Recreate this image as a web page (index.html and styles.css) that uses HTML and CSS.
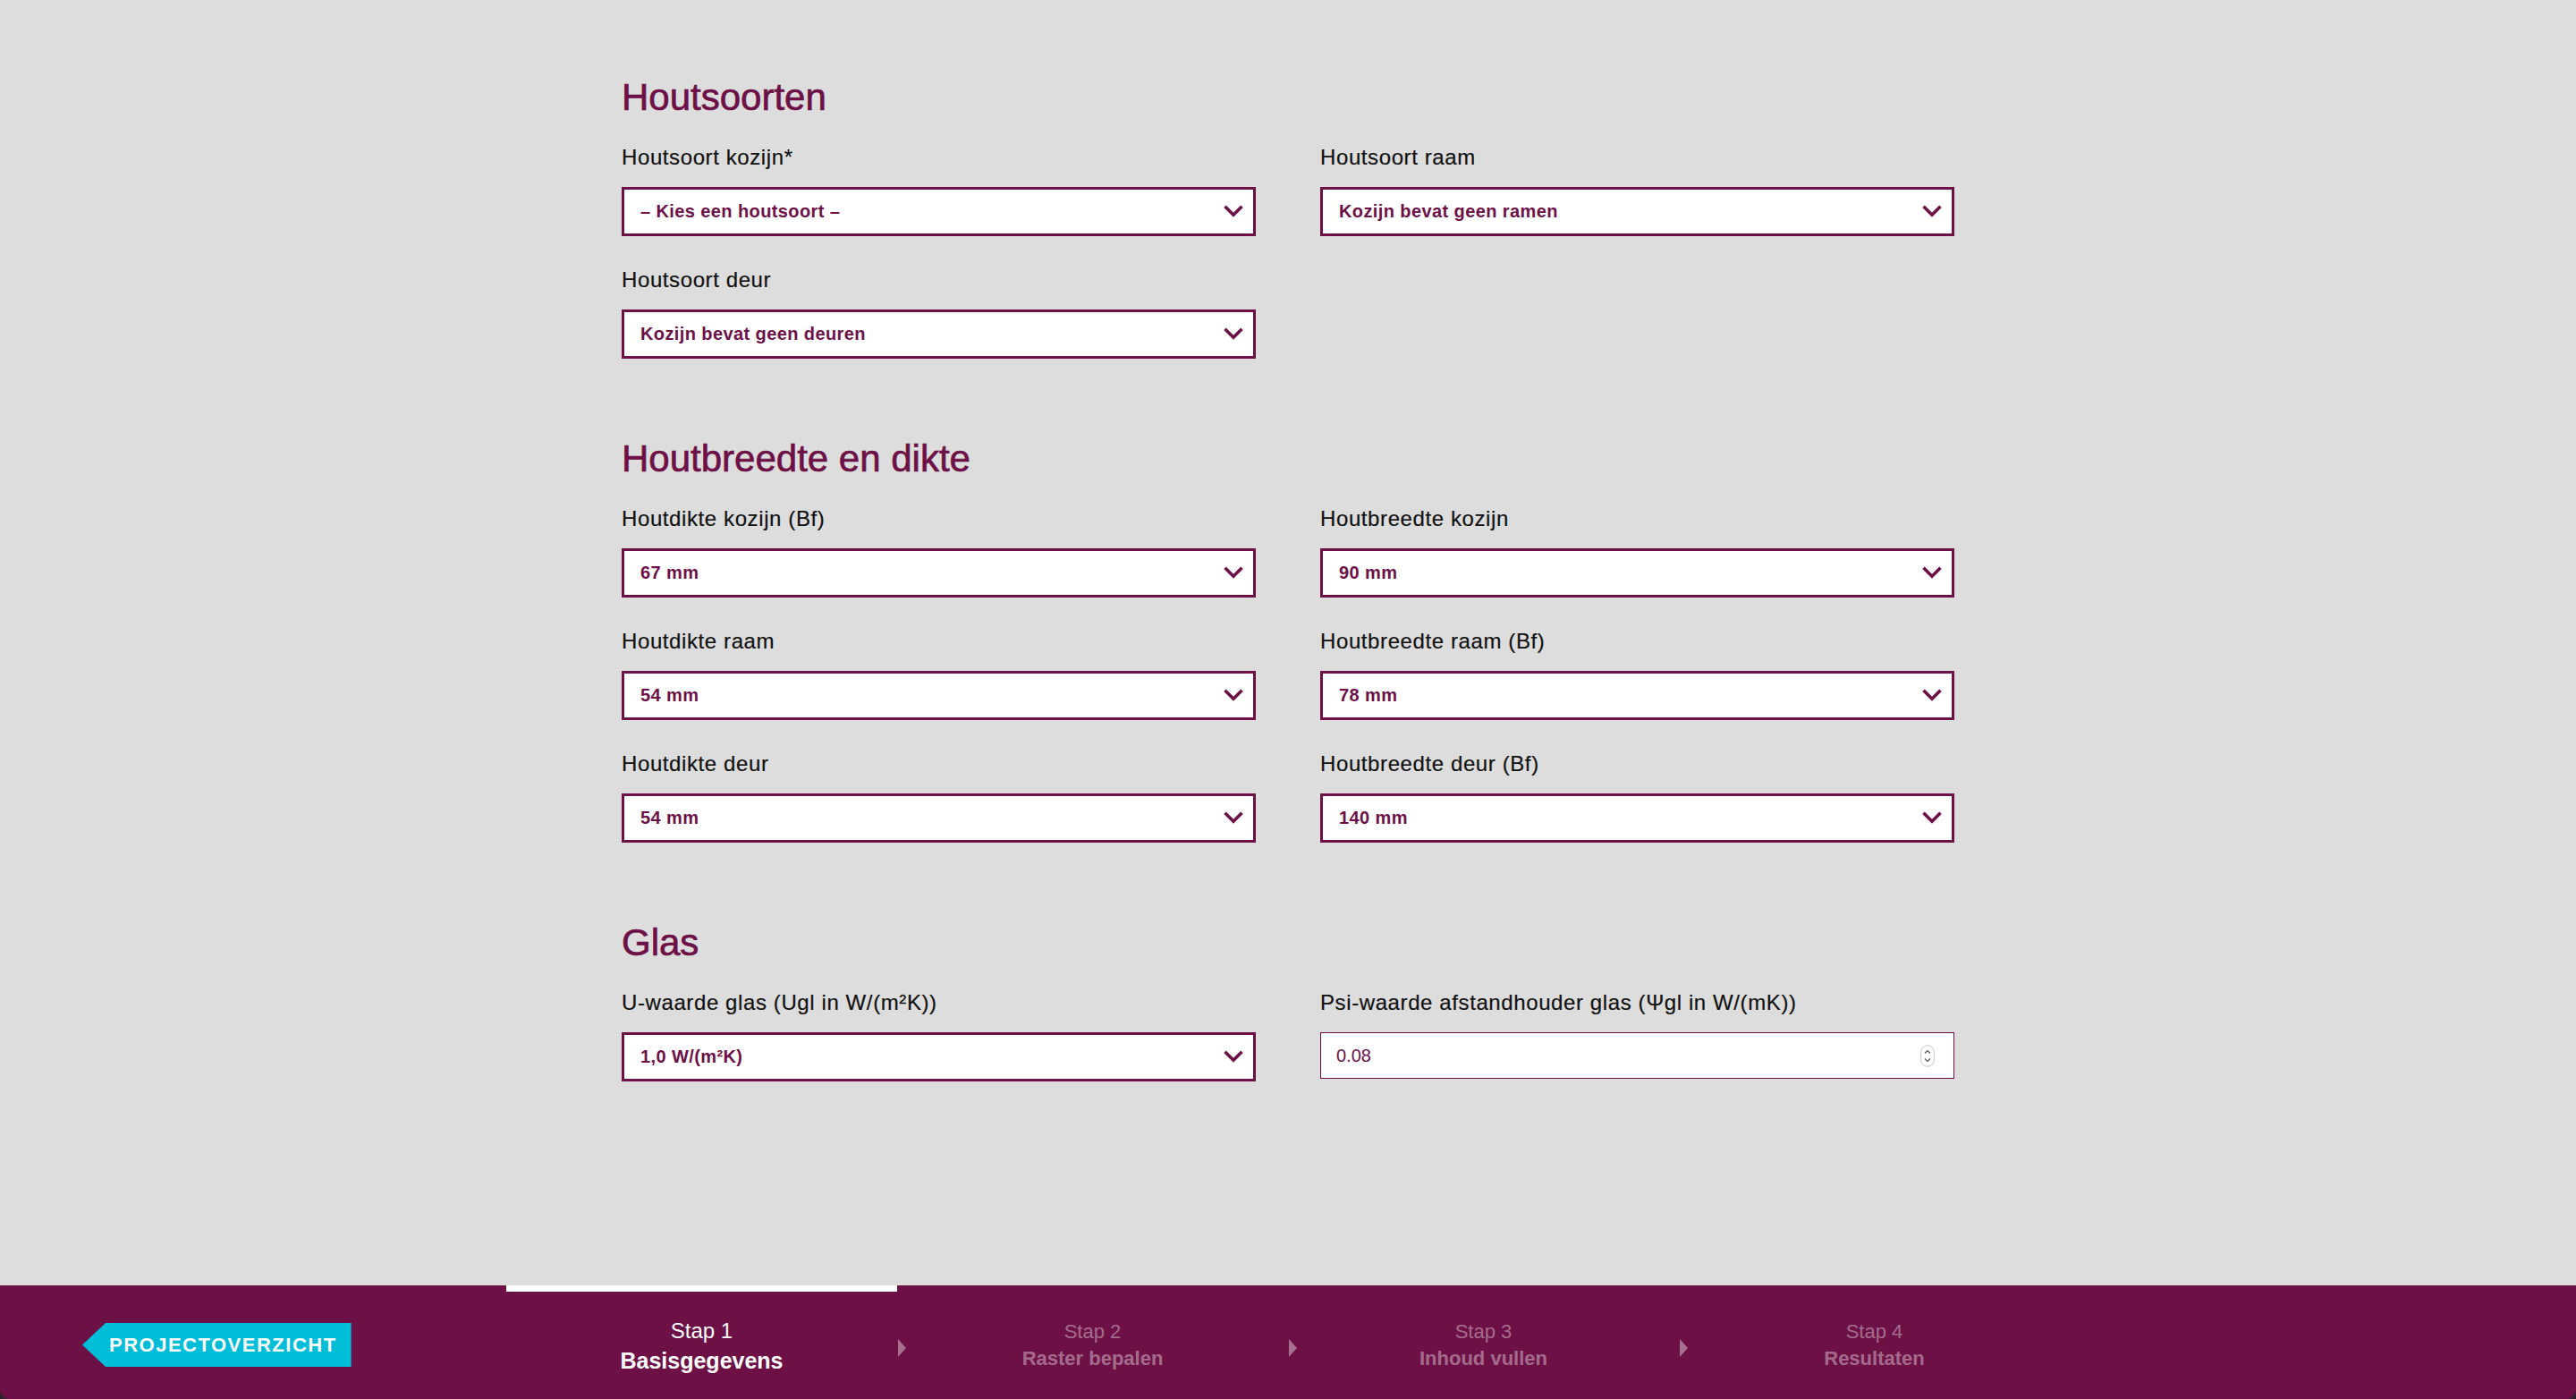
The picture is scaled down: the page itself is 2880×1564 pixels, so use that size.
FILE: index.html
```html
<!DOCTYPE html>
<html lang="nl">
<head>
<meta charset="utf-8">
<title>Basisgegevens</title>
<link rel="stylesheet" href="styles.css">
</head>
<body>
<main class="main">
  <section class="section">
    <h2 class="section-title">Houtsoorten</h2>
    <div class="grid">
      <div class="field">
        <label class="label">Houtsoort kozijn*</label>
        <div class="select"><span class="select-value">– Kies een houtsoort –</span><svg class="chev" width="22" height="14" viewBox="0 0 22 14"><path d="M1.5 1.8 L11 11.3 L20.5 1.8" fill="none" stroke="#6d1046" stroke-width="3.6"/></svg></div>
      </div>
      <div class="field">
        <label class="label">Houtsoort raam</label>
        <div class="select"><span class="select-value">Kozijn bevat geen ramen</span><svg class="chev" width="22" height="14" viewBox="0 0 22 14"><path d="M1.5 1.8 L11 11.3 L20.5 1.8" fill="none" stroke="#6d1046" stroke-width="3.6"/></svg></div>
      </div>
      <div class="field">
        <label class="label">Houtsoort deur</label>
        <div class="select"><span class="select-value">Kozijn bevat geen deuren</span><svg class="chev" width="22" height="14" viewBox="0 0 22 14"><path d="M1.5 1.8 L11 11.3 L20.5 1.8" fill="none" stroke="#6d1046" stroke-width="3.6"/></svg></div>
      </div>
    </div>
  </section>

  <section class="section">
    <h2 class="section-title">Houtbreedte en dikte</h2>
    <div class="grid">
      <div class="field">
        <label class="label">Houtdikte kozijn (Bf)</label>
        <div class="select"><span class="select-value">67 mm</span><svg class="chev" width="22" height="14" viewBox="0 0 22 14"><path d="M1.5 1.8 L11 11.3 L20.5 1.8" fill="none" stroke="#6d1046" stroke-width="3.6"/></svg></div>
      </div>
      <div class="field">
        <label class="label">Houtbreedte kozijn</label>
        <div class="select"><span class="select-value">90 mm</span><svg class="chev" width="22" height="14" viewBox="0 0 22 14"><path d="M1.5 1.8 L11 11.3 L20.5 1.8" fill="none" stroke="#6d1046" stroke-width="3.6"/></svg></div>
      </div>
      <div class="field">
        <label class="label">Houtdikte raam</label>
        <div class="select"><span class="select-value">54 mm</span><svg class="chev" width="22" height="14" viewBox="0 0 22 14"><path d="M1.5 1.8 L11 11.3 L20.5 1.8" fill="none" stroke="#6d1046" stroke-width="3.6"/></svg></div>
      </div>
      <div class="field">
        <label class="label">Houtbreedte raam (Bf)</label>
        <div class="select"><span class="select-value">78 mm</span><svg class="chev" width="22" height="14" viewBox="0 0 22 14"><path d="M1.5 1.8 L11 11.3 L20.5 1.8" fill="none" stroke="#6d1046" stroke-width="3.6"/></svg></div>
      </div>
      <div class="field">
        <label class="label">Houtdikte deur</label>
        <div class="select"><span class="select-value">54 mm</span><svg class="chev" width="22" height="14" viewBox="0 0 22 14"><path d="M1.5 1.8 L11 11.3 L20.5 1.8" fill="none" stroke="#6d1046" stroke-width="3.6"/></svg></div>
      </div>
      <div class="field">
        <label class="label">Houtbreedte deur (Bf)</label>
        <div class="select"><span class="select-value">140 mm</span><svg class="chev" width="22" height="14" viewBox="0 0 22 14"><path d="M1.5 1.8 L11 11.3 L20.5 1.8" fill="none" stroke="#6d1046" stroke-width="3.6"/></svg></div>
      </div>
    </div>
  </section>

  <section class="section">
    <h2 class="section-title">Glas</h2>
    <div class="grid">
      <div class="field">
        <label class="label">U-waarde glas (Ugl in W/(m²K))</label>
        <div class="select"><span class="select-value">1,0 W/(m²K)</span><svg class="chev" width="22" height="14" viewBox="0 0 22 14"><path d="M1.5 1.8 L11 11.3 L20.5 1.8" fill="none" stroke="#6d1046" stroke-width="3.6"/></svg></div>
      </div>
      <div class="field">
        <label class="label">Psi-waarde afstandhouder glas (Ψgl in W/(mK))</label>
        <div class="number">
          <input class="number-input" type="text" value="0.08">
          <svg class="spinner" width="16" height="25" viewBox="0 0 16 25"><rect x="0.75" y="0.75" width="14.5" height="23.5" rx="7.25" fill="#fff" stroke="#c9c9c9" stroke-width="1"/><path d="M5 9.5 L8 6.5 L11 9.5" fill="none" stroke="#555" stroke-width="1.2"/><path d="M5 15.5 L8 18.5 L11 15.5" fill="none" stroke="#555" stroke-width="1.2"/></svg>
        </div>
      </div>
    </div>
  </section>
</main>

<div class="footer-wrap">
  <footer class="footer">
    <div class="footer-left">
      <a class="back-btn">PROJECTOVERZICHT</a>
    </div>
    <nav class="steps">
      <div class="step step-active">
        <span class="step-num">Stap 1</span>
        <span class="step-name">Basisgegevens</span>
      </div>
      <div class="step step-arrow">
        <span class="step-num">Stap 2</span>
        <span class="step-name">Raster bepalen</span>
      </div>
      <div class="step step-arrow">
        <span class="step-num">Stap 3</span>
        <span class="step-name">Inhoud vullen</span>
      </div>
      <div class="step step-arrow">
        <span class="step-num">Stap 4</span>
        <span class="step-name">Resultaten</span>
      </div>
    </nav>
    <div class="footer-right"></div>
  </footer>
</div>
</body>
</html>
```

FILE: styles.css
```css
* {
  box-sizing: border-box;
}

html, body {
  margin: 0;
  padding: 0;
}

body {
  height: 100vh;
  display: flex;
  flex-direction: column;
  background: #dddddd;
  font-family: "Liberation Sans", Arial, Helvetica, sans-serif;
  color: #111111;
}

.main {
  flex: 1;
  width: 1490px;
  margin: 0 auto;
  padding-top: 85px;
}

.section {
  margin-bottom: 88px;
}

.section-title {
  margin: 0 0 29px;
  font-size: 42px;
  line-height: 48px;
  font-weight: normal;
  color: #6d1046;
  -webkit-text-stroke: 0.7px #6d1046;
}

.grid {
  display: grid;
  grid-template-columns: 1fr 1fr;
  column-gap: 72px;
  row-gap: 35px;
}

.field {
  display: flex;
  flex-direction: column;
}

.label {
  font-size: 24px;
  line-height: 28px;
  letter-spacing: 0.6px;
  margin-bottom: 19px;
  color: #111111;
  -webkit-text-stroke: 0.2px #111111;
}

.select {
  height: 55px;
  background: #ffffff;
  border: 3px solid #6d1046;
  display: flex;
  align-items: center;
  justify-content: space-between;
  padding: 0 11px 0 18px;
}

.select-value {
  font-size: 20px;
  font-weight: bold;
  letter-spacing: 0.4px;
  color: #6d1046;
}

.chev {
  display: block;
  margin-top: -1px;
}

.number {
  height: 52px;
  background: #ffffff;
  border: 1px solid #6d1046;
  display: flex;
  align-items: center;
  padding: 0 21px 0 17px;
}

.number-input {
  flex: 1;
  border: 0;
  outline: 0;
  padding: 0;
  background: transparent;
  font-family: "Liberation Sans", Arial, Helvetica, sans-serif;
  font-size: 20px;
  color: #6d1046;
}

.spinner {
  display: block;
}

.footer-wrap {
  background: #262626;
  flex-shrink: 0;
}

.footer {
  height: 127px;
  background: #6d1046;
  border-radius: 0 0 10px 10px;
  display: grid;
  grid-template-columns: 566px 1748px 1fr;
}

.footer-left {
  display: flex;
  align-items: center;
  padding: 6px 0 0 92px;
}

.back-btn {
  display: inline-flex;
  align-items: center;
  height: 49px;
  padding: 0 16px 0 30px;
  background: #00bdd8;
  color: #ffffff;
  font-size: 22px;
  font-weight: bold;
  letter-spacing: 1.5px;
  clip-path: polygon(26px 0, 100% 0, 100% 100%, 26px 100%, 0 50%);
}

.steps {
  display: grid;
  grid-template-columns: repeat(4, 1fr);
}

.step {
  position: relative;
  border-top: 7px solid transparent;
  display: flex;
  flex-direction: column;
  align-items: center;
  justify-content: center;
  color: rgba(255, 255, 255, 0.4);
}

.step-num {
  font-size: 22px;
  line-height: 30px;
}

.step-name {
  font-size: 22px;
  line-height: 30px;
  font-weight: bold;
}

.step-active {
  border-top-color: #ffffff;
  color: #ffffff;
  padding-top: 3px;
}

.step-active .step-num {
  font-size: 24px;
  line-height: 30px;
}

.step-active .step-name {
  font-size: 25px;
  line-height: 36px;
}

.step-arrow::before {
  content: "";
  position: absolute;
  left: 1px;
  top: 53px;
  width: 0;
  height: 0;
  border-top: 10px solid transparent;
  border-bottom: 10px solid transparent;
  border-left: 9px solid rgba(255, 255, 255, 0.4);
}
```
